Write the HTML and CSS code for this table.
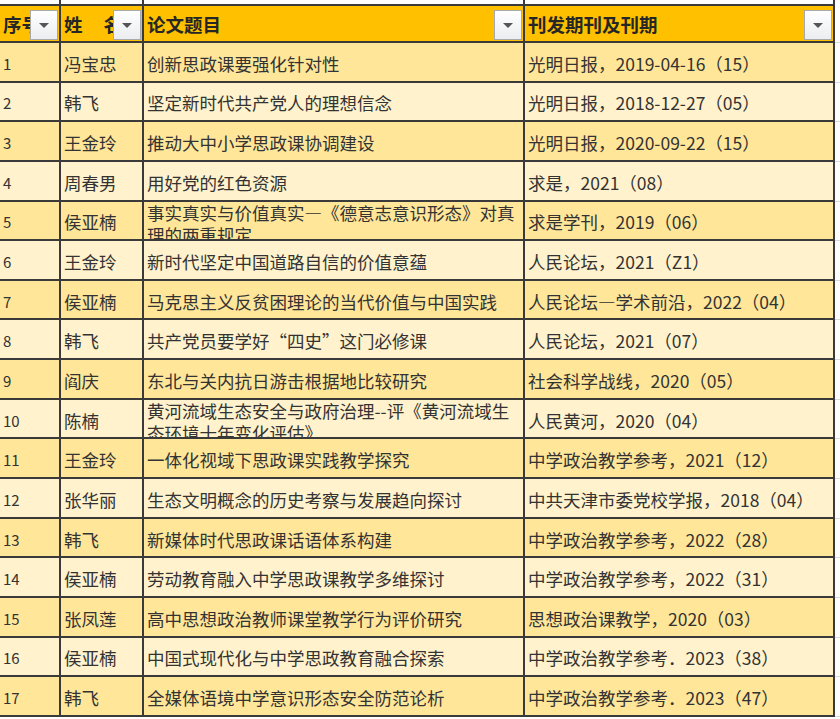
FILE: index.html
```html
<!DOCTYPE html>
<html lang="zh-CN">
<head>
<meta charset="utf-8">
<title>论文列表</title>
<link rel="stylesheet" href="styles.css">
</head>
<body>
<div class="sheet">
  <div class="row row-top">
    <div class="cell"></div><div class="cell"></div><div class="cell"></div><div class="cell"></div><div class="filler"></div>
  </div>
  <div class="row row-head">
    <div class="cell">序号<span class="dd"></span></div>
    <div class="cell">姓<span class="gap"></span>名<span class="dd"></span></div>
    <div class="cell">论文题目<span class="dd"></span></div>
    <div class="cell">刊发期刊及刊期<span class="dd"></span></div>
    <div class="filler"></div>
  </div>
  <div class="row odd"><div class="cell num">1</div><div class="cell">冯宝忠</div><div class="cell">创新思政课要强化针对性</div><div class="cell">光明日报，2019-04-16（15）</div><div class="filler"></div></div>
  <div class="row even"><div class="cell num">2</div><div class="cell">韩飞</div><div class="cell">坚定新时代共产党人的理想信念</div><div class="cell">光明日报，2018-12-27（05）</div><div class="filler"></div></div>
  <div class="row odd"><div class="cell num">3</div><div class="cell">王金玲</div><div class="cell">推动大中小学思政课协调建设</div><div class="cell">光明日报，2020-09-22（15）</div><div class="filler"></div></div>
  <div class="row even"><div class="cell num">4</div><div class="cell">周春男</div><div class="cell">用好党的红色资源</div><div class="cell">求是，2021（08）</div><div class="filler"></div></div>
  <div class="row odd"><div class="cell num">5</div><div class="cell">侯亚楠</div><div class="cell wrap"><span class="wrap-text">事实真实与价值真实—《德意志意识形态》对真<br>理的两重规定</span></div><div class="cell">求是学刊，2019（06）</div><div class="filler"></div></div>
  <div class="row even"><div class="cell num">6</div><div class="cell">王金玲</div><div class="cell">新时代坚定中国道路自信的价值意蕴</div><div class="cell">人民论坛，2021（Z1）</div><div class="filler"></div></div>
  <div class="row odd"><div class="cell num">7</div><div class="cell">侯亚楠</div><div class="cell">马克思主义反贫困理论的当代价值与中国实践</div><div class="cell">人民论坛—学术前沿，2022（04）</div><div class="filler"></div></div>
  <div class="row even"><div class="cell num">8</div><div class="cell">韩飞</div><div class="cell">共产党员要学好“四史”这门必修课</div><div class="cell">人民论坛，2021（07）</div><div class="filler"></div></div>
  <div class="row odd"><div class="cell num">9</div><div class="cell">阎庆</div><div class="cell">东北与关内抗日游击根据地比较研究</div><div class="cell">社会科学战线，2020（05）</div><div class="filler"></div></div>
  <div class="row even"><div class="cell num">10</div><div class="cell">陈楠</div><div class="cell wrap"><span class="wrap-text">黄河流域生态安全与政府治理--评《黄河流域生<br>态环境十年变化评估》</span></div><div class="cell">人民黄河，2020（04）</div><div class="filler"></div></div>
  <div class="row odd"><div class="cell num">11</div><div class="cell">王金玲</div><div class="cell">一体化视域下思政课实践教学探究</div><div class="cell">中学政治教学参考，2021（12）</div><div class="filler"></div></div>
  <div class="row even"><div class="cell num">12</div><div class="cell">张华丽</div><div class="cell">生态文明概念的历史考察与发展趋向探讨</div><div class="cell">中共天津市委党校学报，2018（04）</div><div class="filler"></div></div>
  <div class="row odd"><div class="cell num">13</div><div class="cell">韩飞</div><div class="cell">新媒体时代思政课话语体系构建</div><div class="cell">中学政治教学参考，2022（28）</div><div class="filler"></div></div>
  <div class="row even"><div class="cell num">14</div><div class="cell">侯亚楠</div><div class="cell">劳动教育融入中学思政课教学多维探讨</div><div class="cell">中学政治教学参考，2022（31）</div><div class="filler"></div></div>
  <div class="row odd"><div class="cell num">15</div><div class="cell">张凤莲</div><div class="cell">高中思想政治教师课堂教学行为评价研究</div><div class="cell">思想政治课教学，2020（03）</div><div class="filler"></div></div>
  <div class="row even"><div class="cell num">16</div><div class="cell">侯亚楠</div><div class="cell">中国式现代化与中学思政教育融合探索</div><div class="cell">中学政治教学参考．2023（38）</div><div class="filler"></div></div>
  <div class="row odd"><div class="cell num">17</div><div class="cell">韩飞</div><div class="cell">全媒体语境中学意识形态安全防范论析</div><div class="cell">中学政治教学参考．2023（47）</div><div class="filler"></div></div>
</div>
</body>
</html>
```

FILE: styles.css
```css
html, body {
  margin: 0;
  padding: 0;
  background: #ffffff;
}

body {
  font-family: "Noto Sans CJK SC", "Noto Sans", sans-serif;
  color: #333333;
  font-size: 17.5px;
}

.sheet {
  display: flex;
  flex-direction: column;
  width: 840px;
}

.row {
  display: grid;
  grid-template-columns: 61px 83px 381px 310px 1fr;
  height: 39.65px;
}

.cell {
  position: relative;
  box-sizing: border-box;
  border-right: 2px solid #3a3a3a;
  border-bottom: 2px solid #3a3a3a;
  padding-left: 3px;
  padding-top: 3px;
  display: flex;
  align-items: center;
  white-space: nowrap;
  overflow: hidden;
  line-height: 21px;
}

.filler {
  box-sizing: border-box;
  border-bottom: 1px solid #dadada;
  background: #ffffff;
}

.row-top {
  height: 4px;
}

.row-top .cell {
  border-bottom: none;
  padding-top: 0;
  background: #ffffff;
}

.row-top .filler {
  border-bottom: none;
}

.row-head {
  height: 39px;
}

.row-head .cell {
  background: #ffc000;
  border-top: 2px solid #3a3a3a;
  padding-top: 2px;
  font-weight: 700;
  font-size: 18.5px;
  color: #262626;
}

.gap {
  display: inline-block;
  width: 21px;
}

.dd {
  position: absolute;
  right: 1px;
  top: 4px;
  width: 28px;
  height: 30px;
  box-sizing: border-box;
  border: 1px solid #a9a9a9;
  background: linear-gradient(#ffffff, #ebedf0);
  display: flex;
  align-items: center;
  justify-content: center;
}

.dd::after {
  content: "";
  width: 0;
  height: 0;
  border-left: 5px solid transparent;
  border-right: 5px solid transparent;
  border-top: 5px solid #555555;
}

.odd .cell {
  background: #ffe699;
}

.even .cell {
  background: #fff2cc;
}

.num {
  font-size: 15px;
}

.wrap {
  align-items: flex-start;
  padding-top: 0;
}

.wrap-text {
  display: block;
  line-height: 22px;
}
```
